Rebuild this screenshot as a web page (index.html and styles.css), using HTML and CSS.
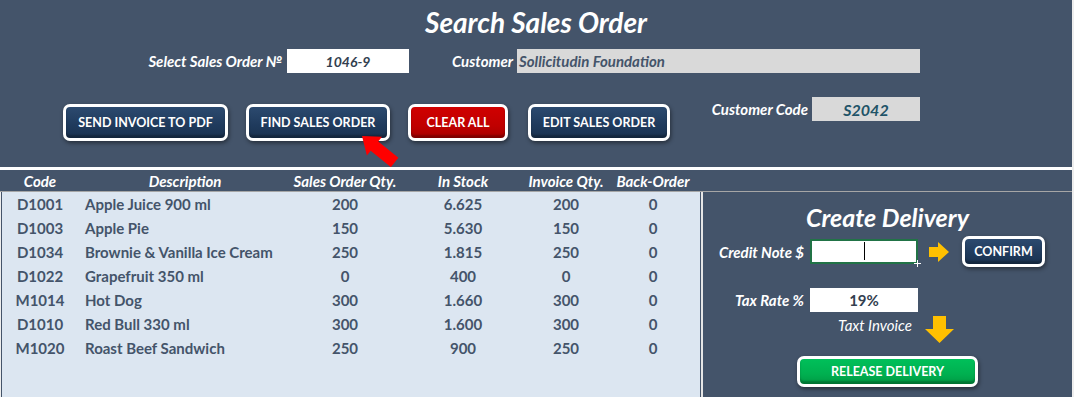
FILE: index.html
```html
<!DOCTYPE html>
<html lang="en">

<head>
    <meta charset="UTF-8">
    <meta name="viewport" content="width=device-width, initial-scale=1.0">
    <title>Search Sales Order</title>
    <link rel="stylesheet" href="styles.css">
</head>

<body>
    <div class="sheet">
        <section class="top">
            <h1 class="title">Search Sales Order</h1>
            <div class="field-row">
                <span class="lbl lbl-order">Select Sales Order №</span>
                <span class="cell cell-order">1046-9</span>
                <span class="lbl lbl-cust">Customer</span>
                <span class="cell cell-cust">Sollicitudin Foundation</span>
            </div>
            <div class="btn-row">
                <button class="btn navy btn-pdf">SEND INVOICE TO PDF</button>
                <div class="find-wrap">
                    <button class="btn navy btn-find">FIND SALES ORDER</button>
                    <svg class="red-arrow" width="42" height="36" viewBox="0 0 42 36">
                        <g transform="translate(2,2) rotate(39)">
                            <polygon points="0,0 16,-12 16,-6 42,-6 42,6 16,6 16,12" fill="#ff0000" />
                        </g>
                    </svg>
                </div>
                <button class="btn red btn-clear">CLEAR ALL</button>
                <button class="btn navy btn-edit">EDIT SALES ORDER</button>
                <div class="code-field">
                    <span class="lbl lbl-code">Customer Code</span>
                    <span class="cell cell-code">S2042</span>
                </div>
            </div>
        </section>

        <div class="white-line"></div>

        <div class="thead cols">
            <span>Code</span>
            <span>Description</span>
            <span>Sales Order Qty.</span>
            <span>In Stock</span>
            <span>Invoice Qty.</span>
            <span>Back-Order</span>
        </div>

        <div class="main">
            <div class="items">
                <div class="row cols"><span>D1001</span><span class="desc">Apple Juice 900 ml</span><span>200</span><span>6.625</span><span>200</span><span>0</span></div>
                <div class="row cols"><span>D1003</span><span class="desc">Apple Pie</span><span>150</span><span>5.630</span><span>150</span><span>0</span></div>
                <div class="row cols"><span>D1034</span><span class="desc">Brownie &amp; Vanilla Ice Cream</span><span>250</span><span>1.815</span><span>250</span><span>0</span></div>
                <div class="row cols"><span>D1022</span><span class="desc">Grapefruit 350 ml</span><span>0</span><span>400</span><span>0</span><span>0</span></div>
                <div class="row cols"><span>M1014</span><span class="desc">Hot Dog</span><span>300</span><span>1.660</span><span>300</span><span>0</span></div>
                <div class="row cols"><span>D1010</span><span class="desc">Red Bull 330 ml</span><span>300</span><span>1.600</span><span>300</span><span>0</span></div>
                <div class="row cols"><span>M1020</span><span class="desc">Roast Beef Sandwich</span><span>250</span><span>900</span><span>250</span><span>0</span></div>
            </div>

            <div class="delivery">
                <h2 class="del-title">Create Delivery</h2>
                <div class="del-row credit-row">
                    <span class="lbl del-lbl">Credit Note $</span>
                    <span class="cell cell-credit"><i class="caret"></i></span>
                    <svg class="arrow-right" width="20" height="20" viewBox="0 0 20 20">
                        <polygon points="0,5 9,5 9,0 20,10 9,20 9,15 0,15" fill="#ffc000" />
                    </svg>
                    <button class="btn navy btn-confirm">CONFIRM</button>
                </div>
                <div class="del-row tax-row">
                    <span class="lbl del-lbl">Tax Rate %</span>
                    <span class="cell cell-tax">19%</span>
                </div>
                <div class="note-row">
                    <span class="note">Taxt Invoice</span>
                    <svg class="arrow-down" width="29" height="27" viewBox="0 0 29 27">
                        <polygon points="8,0 21,0 21,13 29,13 14.5,27 0,13 8,13" fill="#ffc000" />
                    </svg>
                </div>
                <button class="btn green btn-release">RELEASE DELIVERY</button>
            </div>
        </div>
    </div>
</body>

</html>
```

FILE: styles.css
```css
body {
    margin: 0;
    background-color: #eeeeee;
    font-family: "Lato", "Open Sans", sans-serif;
}

.sheet {
    width: 1072px;
    height: 397px;
    overflow: hidden;
}

/* top search panel */
.top {
    height: 167px;
    background-color: #44546a;
    overflow: hidden;
}

.title {
    margin: 0;
    padding-top: 6px;
    line-height: 32px;
    text-align: center;
    font-size: 28px;
    font-weight: bold;
    font-style: italic;
    color: #fff;
}

.lbl {
    color: #fff;
    font-size: 15px;
    font-weight: bold;
    font-style: italic;
    text-align: right;
    white-space: nowrap;
}

.cell {
    display: flex;
    align-items: center;
    height: 24px;
    font-size: 14px;
    font-weight: bold;
    font-style: italic;
    box-sizing: border-box;
}

.field-row {
    display: flex;
    align-items: center;
    margin-top: 11px;
}

.lbl-order {
    width: 282px;
    margin-right: 5px;
}

.cell-order {
    width: 122px;
    justify-content: center;
    background-color: #fff;
    color: #333f50;
}

.lbl-cust {
    width: 104px;
    margin-right: 4px;
}

.cell-cust {
    width: 403px;
    padding-left: 2px;
    background-color: #d9d9d9;
    color: #44546a;
    font-size: 15px;
}

.btn-row {
    display: flex;
    align-items: flex-start;
    margin-top: 31px;
    padding-left: 63px;
}

/* buttons */
.btn {
    height: 37px;
    padding: 0;
    border: 3px solid #fff;
    border-radius: 7px;
    color: #fff;
    font-family: "Lato", "Open Sans", sans-serif;
    font-size: 12.5px;
    font-weight: bold;
    box-shadow: 1px 2px 4px rgba(0, 0, 0, 0.45), inset 0 -3px 2px rgba(0, 0, 0, 0.25);
    cursor: pointer;
}

.navy {
    background: linear-gradient(#2c4a6f, #1f3a5c 60%, #1a3250);
}

.red {
    background: linear-gradient(#d00000, #c00000 60%, #a80000);
}

.green {
    background: linear-gradient(#00c05a, #00b050 60%, #009a44);
}

.btn-pdf {
    width: 165px;
}

.find-wrap {
    position: relative;
    margin-left: 18px;
}

.btn-find {
    width: 144px;
}

.red-arrow {
    position: absolute;
    left: 114px;
    top: 30px;
}

.btn-clear {
    width: 100px;
    margin-left: 18px;
}

.btn-edit {
    width: 142px;
    margin-left: 20px;
}

.code-field {
    display: flex;
    align-items: center;
    margin-top: -7px;
}

.lbl-code {
    width: 138px;
    margin-right: 4px;
}

.cell-code {
    width: 108px;
    justify-content: center;
    background-color: #d9d9d9;
    color: #1f5468;
    font-size: 16px;
}

.white-line {
    height: 3px;
    background-color: #fff;
}

/* table */
.cols {
    display: grid;
    grid-template-columns: 80px 210px 110px 126px 80px 94px;
    align-items: center;
    text-align: center;
    white-space: nowrap;
}

.thead {
    height: 21px;
    background-color: #44546a;
    border-bottom: 1px solid #a6a6a6;
    color: #fff;
    font-size: 15px;
    font-weight: bold;
    font-style: italic;
}

.main {
    display: flex;
    height: 205px;
}

.items {
    width: 698px;
    padding-top: 0;
    margin-left: 1px;
    border-left: 1px solid #44546a;
    border-right: 1px solid #44546a;
    background-color: #dce6f1;
}

.items .cols {
    margin-left: -2px;
}

.row {
    height: 24px;
    color: #44546a;
    font-size: 15px;
    font-weight: bold;
}

.row .desc {
    text-align: left;
    padding-left: 5px;
}

/* delivery panel */
.delivery {
    flex: 1;
    border-left: 2px solid #e6e6e6;
    background-color: #44546a;
}

.del-title {
    margin: 0;
    padding-top: 10px;
    line-height: 30px;
    text-align: center;
    color: #fff;
    font-size: 25px;
    font-weight: bold;
    font-style: italic;
}

.del-row {
    display: flex;
    align-items: center;
}

.del-lbl {
    width: 101px;
    margin-right: 6px;
}

.credit-row {
    height: 31px;
    margin-top: 4px;
}

.cell-credit {
    position: relative;
    width: 108px;
    height: 25px;
    background-color: #fff;
    border: 2px solid #217346;
}

.caret {
    position: absolute;
    left: 52px;
    top: 1px;
    width: 1px;
    height: 18px;
    background-color: #000;
}

.cell-credit::after {
    content: "";
    position: absolute;
    right: -5px;
    bottom: -5px;
    width: 7px;
    height: 7px;
    background: linear-gradient(#fff, #fff) center / 7px 1px no-repeat, linear-gradient(#fff, #fff) center / 1px 7px no-repeat;
}

.arrow-right {
    margin-left: 11px;
}

.btn-confirm {
    width: 83px;
    height: 31px;
    margin-left: 13px;
}

.tax-row {
    height: 24px;
    margin-top: 21px;
}

.cell-tax {
    width: 108px;
    justify-content: center;
    background-color: #fff;
    color: #333f50;
    font-style: normal;
    font-size: 15px;
}

.note-row {
    display: flex;
    align-items: flex-start;
    height: 27px;
    margin-top: 4px;
}

.note {
    width: 100px;
    margin-left: 122px;
    line-height: 18px;
    text-align: center;
    color: #fff;
    font-size: 15px;
    font-style: italic;
}

.btn-release {
    display: block;
    width: 181px;
    height: 31px;
    margin-top: 13px;
    margin-left: 94px;
}
```
